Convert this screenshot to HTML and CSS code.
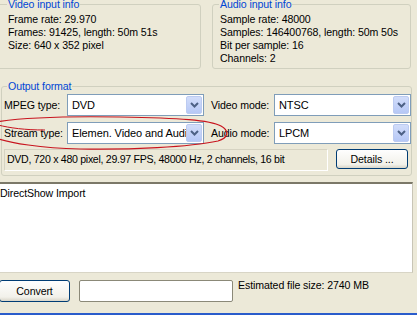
FILE: index.html
```html
<!DOCTYPE html>
<html>
<head>
<meta charset="utf-8">
<link rel="stylesheet" href="styles.css">
</head>
<body>
<div class="win">
  <div class="inputs">
    <fieldset class="group vid">
      <legend>Video input info</legend>
      <div class="line">Frame rate: 29.970</div>
      <div class="line">Frames: 91425, length: 50m 51s</div>
      <div class="line">Size: 640 x 352 pixel</div>
    </fieldset>
    <fieldset class="group aud">
      <legend>Audio input info</legend>
      <div class="line">Sample rate: 48000</div>
      <div class="line">Samples: 146400768, length: 50m 50s</div>
      <div class="line">Bit per sample: 16</div>
      <div class="line">Channels: 2</div>
    </fieldset>
  </div>
  <fieldset class="group out">
    <legend>Output format</legend>
    <div class="grid">
      <span class="lbl">MPEG type:</span>
      <div class="combo"><span class="val">DVD</span><span class="drop"><svg width="9" height="6" viewBox="0 0 9 6"><path d="M1 1 L4.5 4.5 L8 1" fill="none" stroke="#4d6185" stroke-width="2"/></svg></span></div>
      <span class="lbl lbl2">Video mode:</span>
      <div class="combo"><span class="val">NTSC</span><span class="drop"><svg width="9" height="6" viewBox="0 0 9 6"><path d="M1 1 L4.5 4.5 L8 1" fill="none" stroke="#4d6185" stroke-width="2"/></svg></span></div>
      <span class="lbl">Stream type:</span>
      <div class="combo"><span class="val">Elemen. Video and Audio</span><span class="drop"><svg width="9" height="6" viewBox="0 0 9 6"><path d="M1 1 L4.5 4.5 L8 1" fill="none" stroke="#4d6185" stroke-width="2"/></svg></span></div>
      <span class="lbl lbl2">Audio mode:</span>
      <div class="combo"><span class="val">LPCM</span><span class="drop"><svg width="9" height="6" viewBox="0 0 9 6"><path d="M1 1 L4.5 4.5 L8 1" fill="none" stroke="#4d6185" stroke-width="2"/></svg></span></div>
    </div>
    <div class="inforow">
      <div class="info">DVD, 720 x 480 pixel, 29.97 FPS, 48000 Hz, 2 channels, 16 bit</div>
      <div class="btn details">Details ...</div>
    </div>
  </fieldset>
  <div class="log">DirectShow Import</div>
  <div class="bottom">
    <div class="btn convert">Convert</div>
    <div class="edit"></div>
    <span class="est">Estimated file size: 2740 MB</span>
  </div>
  <div class="taskline"></div>
  <svg class="ellipse" width="240" height="40" viewBox="0 0 240 40" aria-hidden="true">
    <path d="M-4 6 C 20 2, 60 0, 120 1 C 180 2, 210 4, 221 10 C 230 15, 228 22, 218 25 C 190 31, 130 34, 80 33 C 40 32, 10 27, -4 22" fill="none" stroke="#c8141e" stroke-width="1.2"/>
    <path d="M-2 9 C 10 12, 25 14, 45 14" fill="none" stroke="#c8141e" stroke-width="1"/>
  </svg>
</div>
</body>
</html>
```
FILE: styles.css
```css
* { box-sizing: border-box; }
html, body { margin: 0; padding: 0; }
body {
  width: 417px;
  height: 315px;
  overflow: hidden;
  background: #ece9d8;
  font-family: "Liberation Sans", Arial, sans-serif;
  font-size: 10.6px;
  letter-spacing: -0.1px;
  color: #000;
}
.win {
  position: relative;
  width: 417px;
  height: 315px;
  display: flex;
  flex-direction: column;
}
.inputs {
  position: relative;
  display: flex;
  gap: 11px;
  margin-left: -3px;
  margin-top: -2px;
}
.group {
  margin: 0;
  border: 1px solid #d0d0bf;
  border-radius: 3px;
  padding: 2px 0 3px 10px;
  min-width: 0;
}
.group legend {
  color: #0046d5;
  padding: 0 1px;
  margin-left: -1px;
  line-height: 13px;
}
.vid { width: 204px; height: 71px; }
.aud { width: 199px; height: 71px; padding-left: 7px; }
.line { line-height: 13px; white-space: nowrap; }
.out {
  position: relative;
  margin: 11px 5px 0 1px;
  padding: 1px 2px 5px 2px;
  height: 96px;
}
.out legend { margin-left: 3px; }
.grid {
  display: grid;
  grid-template-columns: 63px 137px 70px 137px;
  grid-auto-rows: 22px;
  row-gap: 6px;
  align-items: center;
}
.lbl { white-space: nowrap; }
.lbl2 { padding-left: 7px; }
.combo {
  height: 22px;
  background: #fff;
  border: 1px solid #7f9db9;
  display: flex;
  align-items: center;
  padding: 1px;
  overflow: hidden;
}
.val {
  flex: 1;
  padding-left: 3px;
  white-space: nowrap;
  overflow: hidden;
  font-size: 11px;
}
.drop {
  width: 16px;
  height: 18px;
  flex: none;
  border: 1px solid #bccbf1;
  border-radius: 2px;
  background: linear-gradient(#d2ddfa, #b6c8f6);
  display: flex;
  align-items: center;
  justify-content: center;
}
.inforow {
  display: flex;
  align-items: flex-start;
  margin-top: 5px;
  gap: 8px;
}
.info {
  width: 324px;
  height: 22px;
  border: 1px solid #fff;
  border-top-color: #d6d3c2;
  border-left-color: #d6d3c2;
  padding: 3px 0 0 2px;
  white-space: nowrap;
  overflow: hidden;
  letter-spacing: -0.3px;
}
.btn {
  border: 1px solid #003c74;
  border-radius: 3px;
  background: linear-gradient(#fefefe, #f2f1ea 80%, #d8d5c8);
  display: flex;
  align-items: center;
  justify-content: center;
}
.details { width: 72px; height: 20px; }
.log {
  margin-top: 6px;
  height: 91px;
  margin-right: 4px;
  background: #fff;
  border-top: 2px solid #7b7868;
  border-right: 1px solid #c8c5b6;
  border-bottom: 1px solid #d8d5c6;
  line-height: 13px;
  padding-top: 3px;
  white-space: nowrap;
}
.bottom {
  display: flex;
  align-items: flex-start;
  margin-top: 7px;
  height: 22px;
}
.convert { width: 71px; height: 22px; margin-left: -1px; }
.edit {
  width: 154px;
  height: 22px;
  margin-left: 9px;
  background: #fff;
  border: 1px solid #8b8978;
  border-radius: 2px;
}
.est {
  margin-left: 5px;
  margin-top: -1px;
  line-height: 13px;
  white-space: nowrap;
}
.taskline {
  margin-top: auto;
  height: 2px;
  background: #2a5ccb;
}
.ellipse {
  position: absolute;
  left: 0;
  top: 116px;
  overflow: visible;
  pointer-events: none;
}
```
